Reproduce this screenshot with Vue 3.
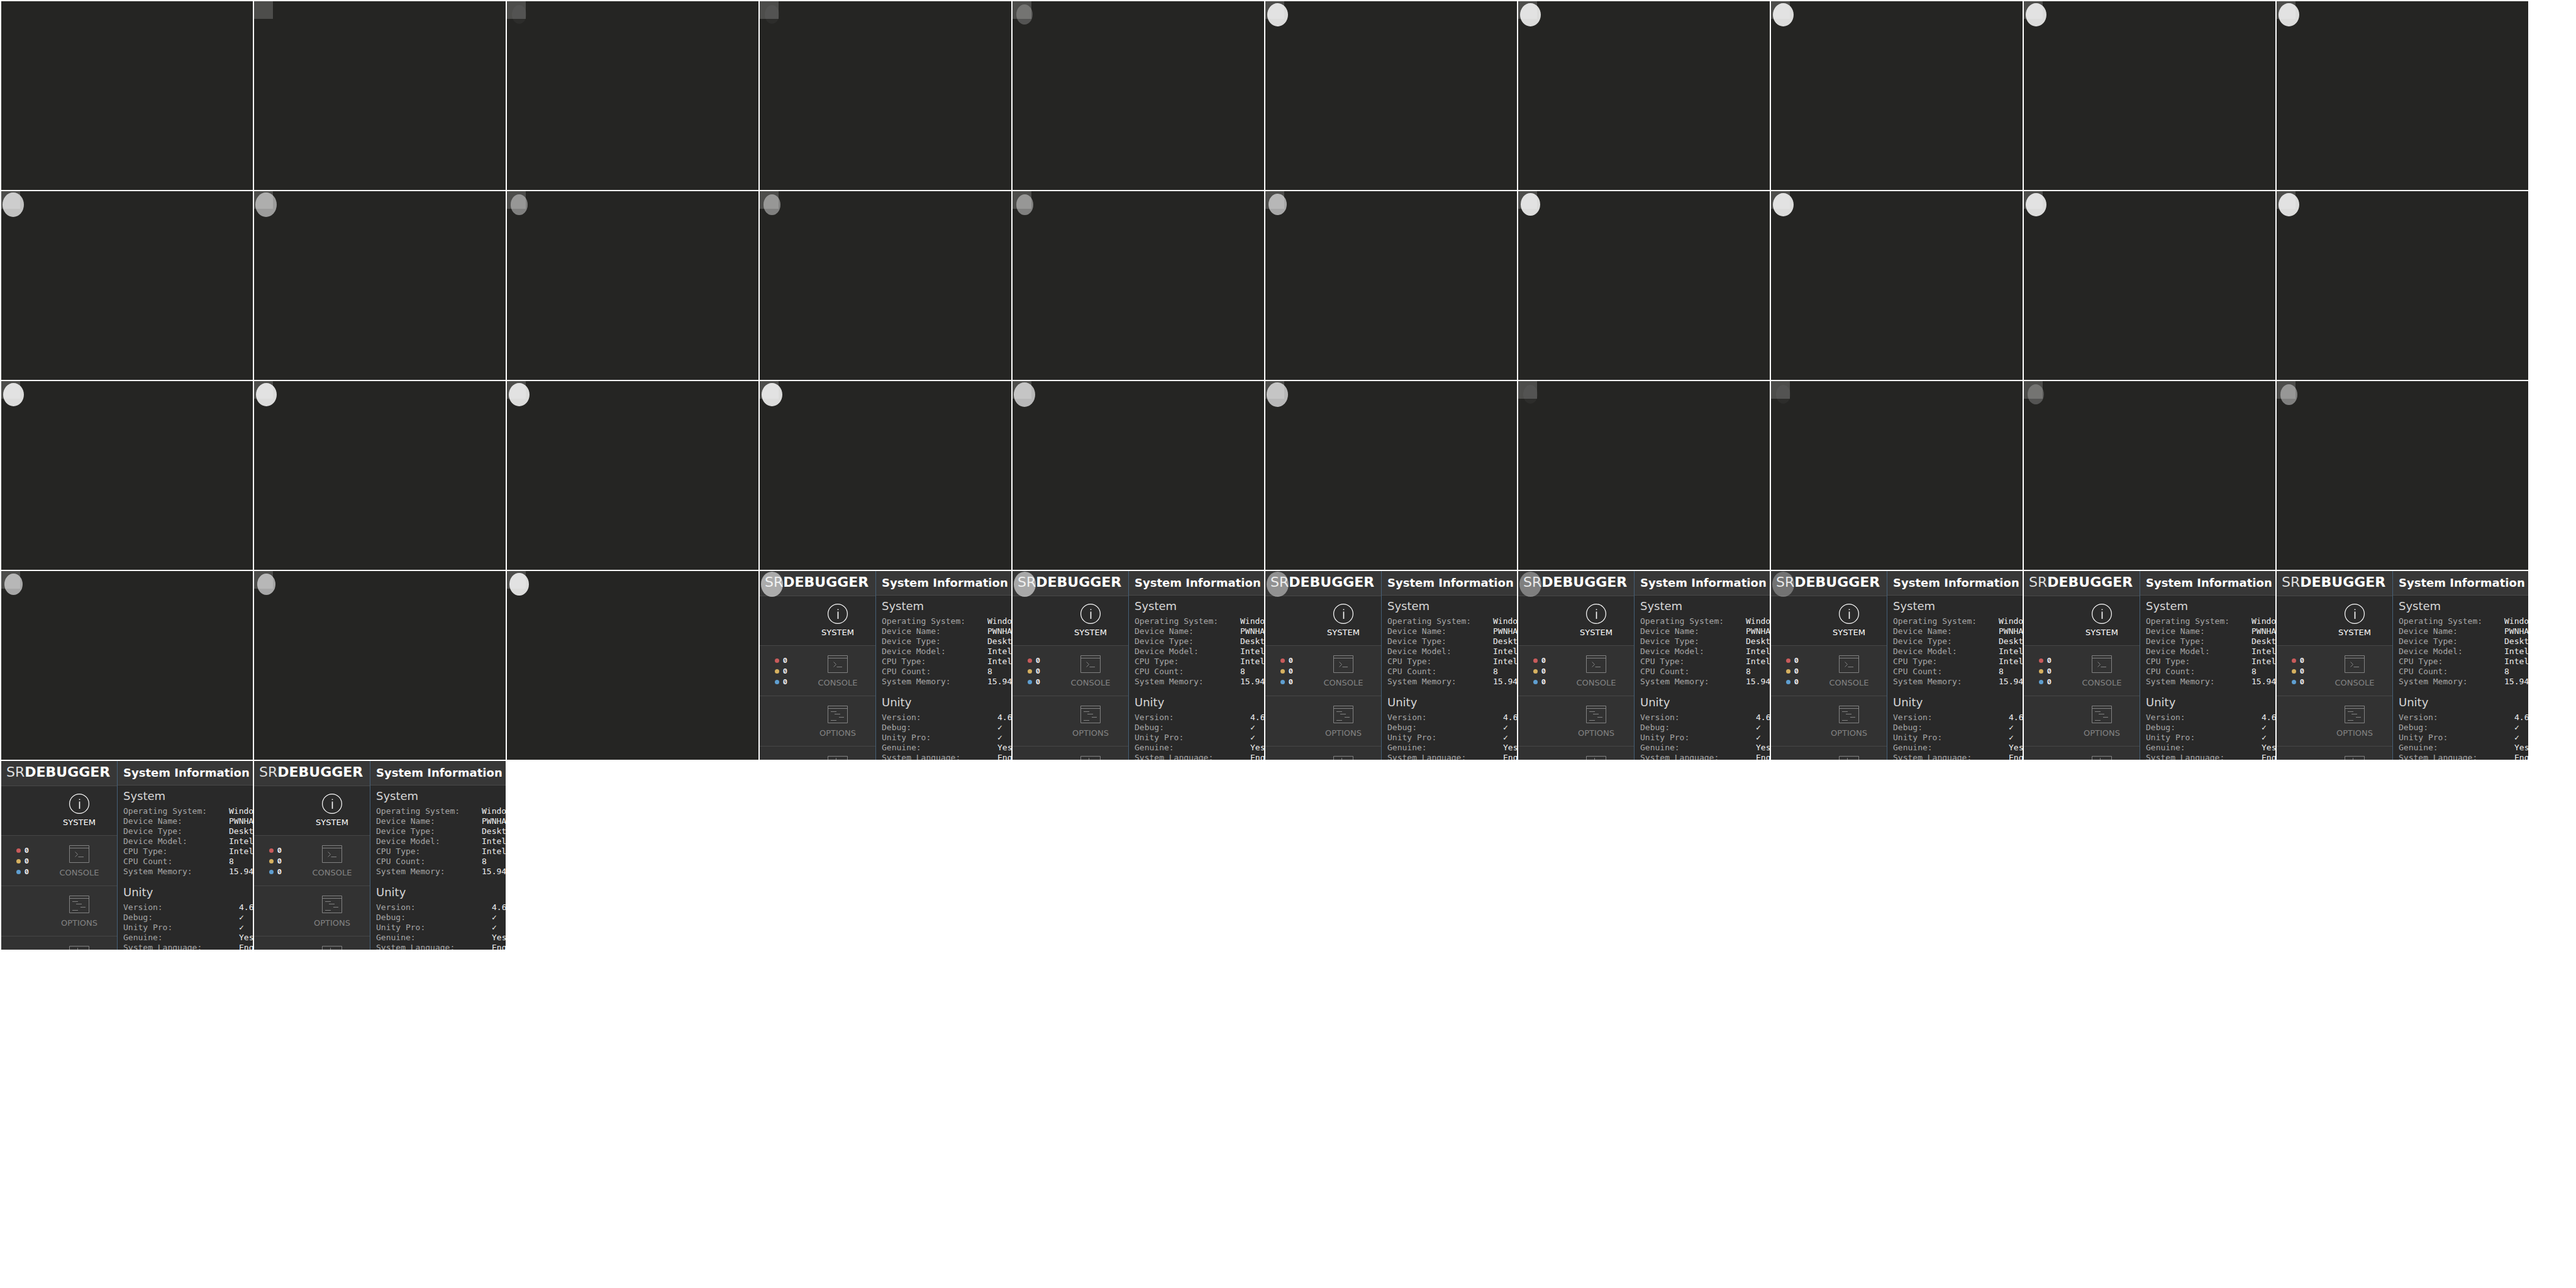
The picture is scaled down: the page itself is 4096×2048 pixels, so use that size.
<script setup>
const spot = (w, h, alpha, square = true) => ({ w, h, alpha, square, app: false })
const panel = (alpha) => ({ w: 35, h: 40, alpha, square: false, app: true })
const repeat = (n, make) => Array.from({ length: n }, make)

const faint = () => spot(23, 30, 0.04)
const dim = () => spot(26, 32, 0.22)
const mid = () => spot(27, 33, 0.42)
const light = () => spot(29, 34, 0.6)
const bright = () => spot(33, 37, 0.84)

const frames = [
  spot(0, 0, 0, false), spot(0, 0, 0), faint(), faint(), dim(), ...repeat(5, bright),
  spot(34, 39, 0.72), spot(34, 39, 0.55), ...repeat(3, mid), light(), spot(31, 36, 0.84), ...repeat(3, bright),
  ...repeat(4, bright), ...repeat(2, () => spot(34, 39, 0.68)), faint(), faint(), dim(), mid(),
  light(), light(), spot(31, 36, 0.84),
  ...[0.58, 0.57, 0.45, 0.36, 0.3, 0, 0, 0, 0].map(panel),
]

const tabs = [
  { name: 'SYSTEM', icon: 'info' },
  { name: 'CONSOLE', icon: 'console' },
  { name: 'OPTIONS', icon: 'options' },
  { name: '', icon: 'profiler' },
]
const counts = ['#c95b5b', '#d6b160', '#5f9fd1']

const sections = [
  {
    title: 'System',
    kind: 'near',
    rows: [
      ['Operating System:', 'Windo'],
      ['Device Name:', 'PWNHA'],
      ['Device Type:', 'Deskt'],
      ['Device Model:', 'Intel'],
      ['CPU Type:', 'Intel'],
      ['CPU Count:', '8'],
      ['System Memory:', '15.94'],
    ],
  },
  {
    title: 'Unity',
    kind: 'far',
    rows: [
      ['Version:', '4.6'],
      ['Debug:', '✓'],
      ['Unity Pro:', '✓'],
      ['Genuine:', 'Yes'],
      ['System Language:', 'Eng'],
    ],
  },
]
</script>

<template>
  <main class="sheet">
    <article v-for="(f, i) in frames" :key="i" class="frame">
      <div v-if="f.app" class="app">
        <aside class="side">
          <header class="brand"><span>SR</span><b>DEBUGGER</b></header>
          <nav>
            <button
              v-for="t in tabs"
              :key="t.icon"
              type="button"
              class="tab"
              :class="{ active: t.icon === 'info' }"
              :aria-label="t.name || t.icon"
            >
              <span class="extra">
                <template v-if="t.icon === 'console'">
                  <span v-for="c in counts" :key="c" class="count">
                    <i class="dot" :style="{ background: c }"></i>0
                  </span>
                </template>
              </span>
              <span class="face">
                <svg width="32" height="32" viewBox="0 0 32 32" fill="none" stroke="currentColor">
                  <template v-if="t.icon === 'info'">
                    <circle cx="16" cy="16" r="15.4" stroke-width="1.2" />
                    <path d="M16.5 12.5V24M16.5 8.5V10" stroke-width="1.6" />
                  </template>
                  <template v-else>
                    <path d="M.5 2.5H31.5V29.5H.5Z" />
                    <path v-if="t.icon !== 'profiler'" d="M.5 6.5H31.5" />
                    <path v-if="t.icon === 'console'" d="M9.5 12.5L13.5 16.5L9.5 20.5M14.5 20.5H23" />
                    <path v-else-if="t.icon === 'options'" d="M5 11.5H14M11 15.5H20M18 20.5H26M5 25.5H14" />
                    <path v-else d="M13.5 5V26" />
                  </template>
                </svg>
                <span class="name">{{ t.name }}</span>
              </span>
            </button>
          </nav>
        </aside>
        <section class="body">
          <h1>System Information</h1>
          <div v-for="s in sections" :key="s.title" class="group">
            <h2>{{ s.title }}</h2>
            <dl :class="s.kind">
              <template v-for="r in s.rows" :key="r[0]">
                <dt>{{ r[0] }}</dt>
                <dd>{{ r[1] }}</dd>
              </template>
            </dl>
          </div>
        </section>
      </div>
      <div v-if="f.square" class="square"></div>
      <div v-if="f.alpha" class="anchor">
        <span
          class="spot"
          :style="{ width: f.w + 'px', height: f.h + 'px', background: `rgba(255,255,255,${f.alpha})` }"
        ></span>
      </div>
    </article>
  </main>
</template>

<style>
body {
  margin: 0;
  background: #fff;
}
</style>

<style scoped>
.sheet {
  display: grid;
  grid-template-columns: repeat(auto-fill, 400px);
  gap: 2px;
  padding: 2px;
  font-family: "DejaVu Sans", sans-serif;
}
.frame {
  position: relative;
  aspect-ratio: 4 / 3;
  overflow: hidden;
  background: #252523;
}
.square {
  width: 30px;
  height: 28px;
  background: #4d4d4b;
}
.anchor {
  position: absolute;
  top: 0;
  left: 0;
  display: flex;
  align-items: center;
  justify-content: center;
  width: 38px;
  height: 42px;
}
.spot {
  flex: none;
  border-radius: 50%;
}
.app {
  display: flex;
  height: 100%;
}
.side {
  box-sizing: border-box;
  flex: none;
  width: 185px;
  overflow: hidden;
  border-right: 1px solid #456078;
  background: #323232;
}
.brand {
  box-sizing: border-box;
  height: 40px;
  padding-left: 8px;
  border-bottom: 1px solid #484848;
  background: #373737;
  color: #fff;
  font-size: 22px;
  line-height: 36px;
  white-space: nowrap;
}
.brand span {
  color: #dedede;
}
.tab {
  box-sizing: border-box;
  display: flex;
  width: 100%;
  height: 80px;
  padding: 13px 0 0;
  border: 0;
  border-bottom: 1px solid #464646;
  background: #323232;
  color: #828282;
  font: inherit;
  font-size: 13px;
  line-height: 16px;
  text-align: center;
}
.tab.active {
  height: 79px;
  padding-top: 12px;
  background: #2b2b2b;
  color: #fff;
}
.extra {
  display: flex;
  flex-direction: column;
  gap: 1px;
  flex: none;
  width: 64px;
  padding-top: 2px;
}
.count {
  display: flex;
  align-items: center;
  gap: 6px;
  padding-left: 24px;
  color: #f2f2f2;
  font-family: Inter, sans-serif;
  font-size: 10px;
  font-weight: 700;
  font-variant-numeric: slashed-zero;
}
.dot {
  width: 7px;
  height: 7px;
  border-radius: 50%;
}
.face {
  display: flex;
  flex-direction: column;
  align-items: center;
  gap: 6px;
  flex: 1;
}
.body {
  flex: 1;
  min-width: 0;
  overflow: hidden;
  background: #292929;
}
h1 {
  box-sizing: border-box;
  height: 39px;
  margin: 0 0 5px;
  padding-left: 9px;
  border-bottom: 1px solid #484848;
  background: #373737;
  color: #fff;
  font-size: 18px;
  line-height: 37px;
  white-space: nowrap;
}
.group {
  margin-bottom: 13px;
  padding-left: 9px;
}
h2 {
  margin: 0 0 4px;
  color: #d6d6d6;
  font-size: 18px;
  font-weight: 400;
  line-height: 24px;
}
dl {
  display: grid;
  margin: 0;
  font-family: "DejaVu Sans Mono", monospace;
  font-size: 13px;
  line-height: 16px;
  white-space: nowrap;
}
.near {
  grid-template-columns: 168px 1fr;
}
.far {
  grid-template-columns: 184px 1fr;
}
dt {
  color: #a6a6a6;
}
dd {
  height: 16px;
  margin: 0;
  color: #eee;
}
</style>
